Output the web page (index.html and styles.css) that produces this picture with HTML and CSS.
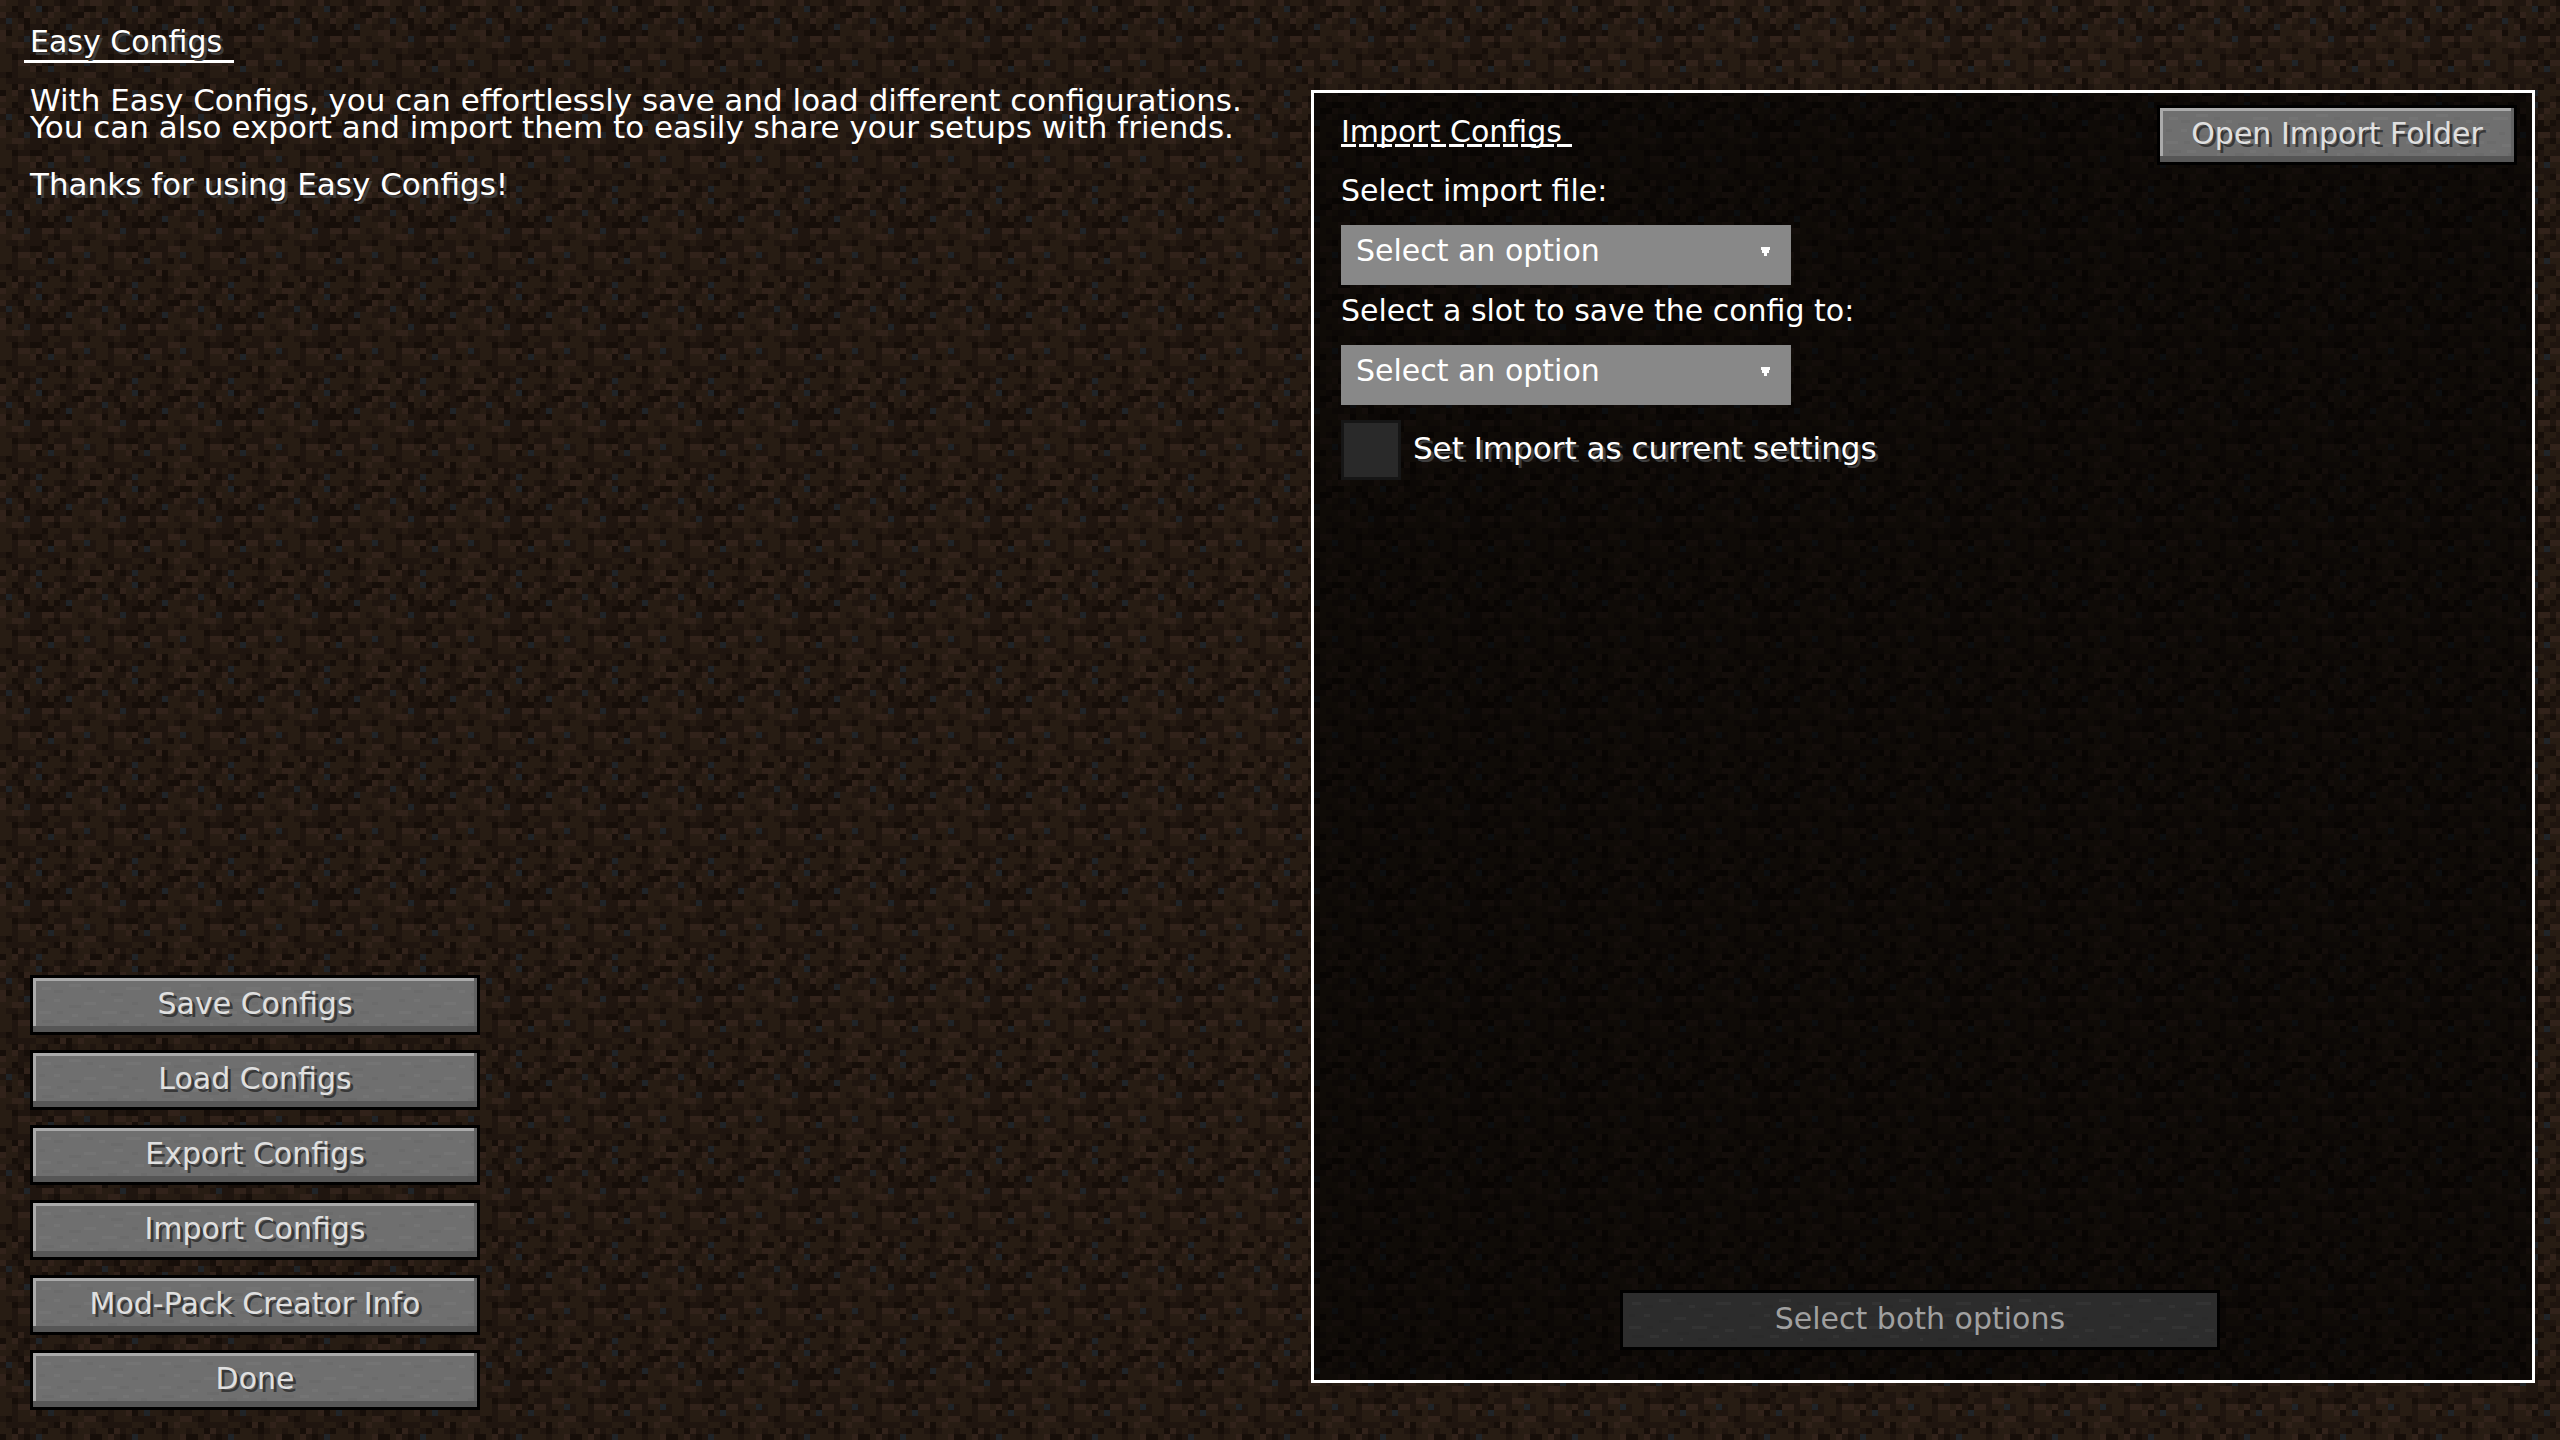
FILE: index.html
```
<!DOCTYPE html>
<html lang="en">
<head>
  <meta charset="UTF-8">
  <meta name="viewport" content="width=device-width, initial-scale=1">
  <title>Easy Configs</title>
  <link rel="stylesheet" href="styles.css">
</head>
<body>
  <div class="screen">
    <div class="sidebar">
      <h1>Easy Configs</h1>
      <p>With Easy Configs, you can effortlessly save and load different configurations.<br>You can also export and import them to easily share your setups with friends.</p>
      <p class="shadow">Thanks for using Easy Configs!</p>

      <div class="menu">
        <button type="button">Save Configs</button>
        <button type="button">Load Configs</button>
        <button type="button">Export Configs</button>
        <button type="button">Import Configs</button>
        <button type="button">Mod-Pack Creator Info</button>
        <button type="button">Done</button>
      </div>
    </div>

    <form class="panel">
      <div class="panel-header">
        <h2>Import Configs</h2>
        <button type="button" class="folder-button">Open Import Folder</button>
      </div>

      <label for="import-file">Select import file:</label>
      <div class="dropdown">
        <select id="import-file">
          <option>Select an option</option>
        </select>
        <svg class="arrow" viewBox="0 0 9 9" shape-rendering="crispEdges"><path d="M0 0h9v3h-1v3h-2v3h-3v-3h-2v-3h-1z" fill="#fff"/></svg>
      </div>

      <label for="slot">Select a slot to save the config to:</label>
      <div class="dropdown">
        <select id="slot">
          <option>Select an option</option>
        </select>
        <svg class="arrow" viewBox="0 0 9 9" shape-rendering="crispEdges"><path d="M0 0h9v3h-1v3h-2v3h-3v-3h-2v-3h-1z" fill="#fff"/></svg>
      </div>

      <div class="check-row">
        <input type="checkbox" id="set-current">
        <label for="set-current" class="shadow">Set Import as current settings</label>
      </div>

      <button type="submit" class="submit-button" disabled>Select both options</button>
    </form>
  </div>
</body>
</html>
```
FILE: styles.css
```
* { box-sizing: border-box; }
body {
  margin: 0;
  font-family: 'DejaVu Sans', sans-serif;
  font-size: 30px;
  line-height: 27px;
  color: white;
  background-color: #1f150f;
  /* 16x16 dirt tile, 6px per texel */
  background-image: url("data:image/svg+xml,%3Csvg xmlns='http://www.w3.org/2000/svg' width='96' height='96' viewBox='0 0 16 16' shape-rendering='crispEdges'%3E%3Crect width='16' height='16' fill='%231f150f'/%3E%3Cpath fill='%23271c13' d='M1 0h2v1h-2zM7 0h2v1h-2zM14 0h1v1h-1zM0 1h2v1h-2zM4 1h2v1h-2zM12 1h1v1h-1zM5 2h2v1h-2zM9 2h2v1h-2zM15 2h1v1h-1zM2 3h1v1h-1zM5 3h1v1h-1zM8 3h2v1h-2zM14 3h1v1h-1zM0 4h1v1h-1zM2 4h1v1h-1zM8 4h1v1h-1zM12 4h2v1h-2zM2 5h2v1h-2zM12 5h3v1h-3zM1 6h2v1h-2zM12 6h1v1h-1zM14 6h2v1h-2zM0 7h2v1h-2zM4 7h1v1h-1zM7 7h1v1h-1zM10 7h4v1h-4zM0 8h1v1h-1zM3 8h1v1h-1zM8 8h2v1h-2zM12 8h1v1h-1zM15 8h1v1h-1zM0 9h2v1h-2zM8 9h1v1h-1zM14 9h2v1h-2zM0 10h2v1h-2zM5 10h1v1h-1zM12 10h2v1h-2zM0 11h2v1h-2zM3 11h2v1h-2zM7 11h1v1h-1zM9 11h2v1h-2zM13 11h1v1h-1zM3 12h3v1h-3zM10 12h4v1h-4zM0 13h1v1h-1zM6 13h2v1h-2zM12 13h1v1h-1zM14 13h2v1h-2zM0 14h2v1h-2zM5 14h1v1h-1zM8 14h2v1h-2zM13 14h2v1h-2zM1 15h1v1h-1zM7 15h4v1h-4zM12 15h2v1h-2z'/%3E%3Cpath fill='%2331221a' d='M0 0h1v1h-1zM5 0h1v1h-1zM13 0h1v1h-1zM15 0h1v1h-1zM9 1h1v1h-1zM0 2h1v1h-1zM4 2h1v1h-1zM8 2h1v1h-1zM14 2h1v1h-1zM7 3h1v1h-1zM13 3h1v1h-1zM3 4h1v1h-1zM0 5h1v2h-1zM15 5h1v1h-1zM7 6h2v1h-2zM10 6h2v1h-2zM2 7h2v1h-2zM12 9h2v1h-2zM3 10h2v1h-2zM6 10h1v1h-1zM9 10h2v1h-2zM5 11h1v1h-1zM14 12h2v1h-2zM10 13h1v1h-1zM13 13h1v1h-1zM3 14h1v1h-1zM2 15h1v1h-1zM14 15h1v1h-1z'/%3E%3Cpath fill='%23160e09' d='M10 0h1v1h-1zM2 1h1v1h-1zM7 1h1v1h-1zM14 1h2v1h-2zM3 2h1v1h-1zM12 2h2v1h-2zM4 3h1v2h-1zM10 3h1v1h-1zM7 4h1v1h-1zM9 4h1v1h-1zM1 5h1v1h-1zM6 5h3v1h-3zM11 5h1v1h-1zM9 7h1v1h-1zM7 8h1v1h-1zM14 8h1v1h-1zM2 9h1v1h-1zM5 9h2v1h-2zM8 10h1v1h-1zM6 11h1v1h-1zM12 11h1v1h-1zM1 12h1v1h-1zM9 13h1v1h-1zM11 13h1v2h-1zM2 14h1v1h-1zM7 14h1v1h-1zM0 15h1v1h-1zM4 15h1v1h-1zM15 15h1v1h-1z'/%3E%3Cpath fill='%23202428' d='M6 1h1v1h-1zM1 3h1v1h-1zM11 4h1v1h-1zM4 6h1v1h-1zM14 10h1v1h-1zM8 11h1v1h-1zM6 15h1v1h-1z'/%3E%3C/svg%3E");
}
.screen {
  min-height: 100vh;
  padding: 24px 25px 30px 24px;
  display: grid;
  grid-template-columns: 1fr 48.75%;
}
.sidebar {
  display: flex;
  flex-direction: column;
  align-items: flex-start;
}
h1, h2, p { margin: 0; }
h1, h2 {
  font-size: 30px;
  font-weight: 400;
}
h1 {
  line-height: 36px;
  padding: 0 12px 0 6px;
  border-bottom: 3px solid white;
  margin-bottom: 24px;
  text-shadow: 3px 3px #3e3e3e;
}
p {
  padding-left: 6px;
  margin-bottom: 30px;
  font-size: 31px;
}
.shadow { text-shadow: 3px 3px #3e3e3e; }
.menu {
  margin-top: auto;
  margin-left: 6px;
  width: 450px;
  display: flex;
  flex-direction: column;
  gap: 15px;
}
button {
  height: 60px;
  padding: 0 0 3px;
  border: 3px solid black;
  font: inherit;
  color: #e0e0e0;
  text-shadow: 3px 3px #383838;
  background-color: #6f6f6f;
  /* faint stone grain */
  background-image: url("data:image/svg+xml,%3Csvg xmlns='http://www.w3.org/2000/svg' width='120' height='54' viewBox='0 0 40 18' shape-rendering='crispEdges'%3E%3Cpath fill='%23fff' fill-opacity='.03' d='M3 3h3v1h-3zM12 2h4v1h-4zM22 4h2v1h-2zM31 3h5v1h-5zM7 7h2v1h-2zM17 8h4v1h-4zM27 7h3v1h-3zM2 11h4v1h-4zM13 12h2v1h-2zM23 11h5v1h-5zM34 12h3v1h-3zM9 14h3v1h-3zM19 15h1v1h-1zM30 14h2v1h-2z'/%3E%3Cpath fill='%23000' fill-opacity='.04' d='M7 4h3v1h-3zM18 3h2v1h-2zM26 5h4v1h-4zM2 7h2v1h-2zM12 9h4v1h-4zM33 8h2v1h-2zM8 11h2v1h-2zM18 13h4v1h-4zM29 11h3v1h-3zM3 14h4v1h-4zM25 15h3v1h-3zM36 15h2v1h-2z'/%3E%3C/svg%3E");
  box-shadow: inset 0 -6px #565656, inset -3px 0 #626262, inset 3px 3px #aaaaaa;
  cursor: pointer;
}
button:disabled {
  color: #a0a0a0;
  text-shadow: none;
  background-color: #2c2c2c;
  box-shadow: none;
  cursor: default;
}
.panel {
  margin: 66px 0 27px;
  padding: 12px 15px 30px 27px;
  border: 3px solid white;
  background: rgba(0, 0, 0, 0.6);
  display: flex;
  flex-direction: column;
  align-items: flex-start;
}
.panel-header {
  width: 100%;
  display: flex;
  justify-content: space-between;
  align-items: flex-start;
  margin-bottom: 12px;
}
.panel-header h2 {
  margin-top: 15px;
  padding: 0 12px 3px 0;
  line-height: 24px;
  background: repeating-linear-gradient(to right, white 0 15px, transparent 15px 18px) bottom / 100% 3px no-repeat;
}
.folder-button { width: 360px; }
.dropdown {
  position: relative;
  width: 450px;
  margin: 21px 0 12px;
}
select {
  appearance: none;
  display: block;
  width: 100%;
  height: 60px;
  padding: 0 45px 9px 15px;
  border: none;
  border-radius: 0;
  background: #888888;
  color: white;
  font: inherit;
  line-height: 36px;
}
.arrow {
  position: absolute;
  right: 21px;
  top: 22px;
  width: 9px;
  height: 9px;
  pointer-events: none;
}
.check-row {
  display: flex;
  align-items: center;
  gap: 12px;
  margin-top: 3px;
}
.check-row label {
  padding-bottom: 3px;
  font-size: 31px;
}
input[type="checkbox"] {
  appearance: none;
  width: 60px;
  height: 60px;
  margin: 0;
  border: 3px solid #161616;
  background: #292929;
}
.submit-button {
  align-self: center;
  width: 600px;
  margin-top: auto;
  margin-right: 18px;
}
```
